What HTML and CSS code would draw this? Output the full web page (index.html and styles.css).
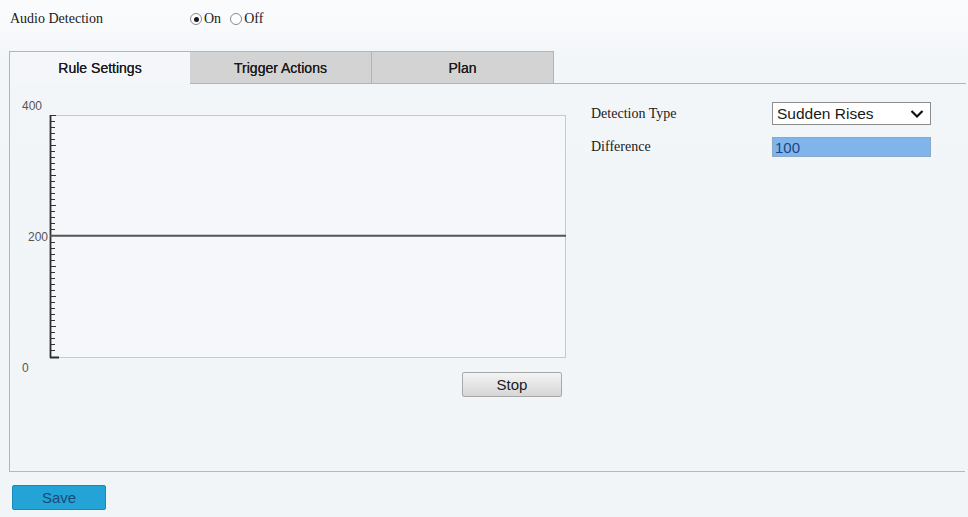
FILE: index.html
```html
<!DOCTYPE html>
<html>
<head>
<meta charset="utf-8">
<link rel="stylesheet" href="styles.css">
</head>
<body>
<div class="page">
  <div class="top-row">
    <span class="top-label">Audio Detection</span>
    <label class="radio"><span class="dot on"></span>On</label>
    <label class="radio"><span class="dot"></span>Off</label>
  </div>
  <div class="tabs">
    <div class="tab active">Rule Settings</div>
    <div class="tab">Trigger Actions</div>
    <div class="tab">Plan</div>
    <div class="tab-fill"></div>
  </div>
  <div class="panel">
    <div class="chart-col">
      <svg class="chart" width="560" height="278" viewBox="0 0 560 278">
        <rect x="40.5" y="21.5" width="515" height="242" fill="#f5f7fa" stroke="#c6c8cb" stroke-width="1"/>
        <path d="M40 21.5h6M40 27.5h5M40 33.5h5M40 39.5h5M40 45.5h5M40 51.5h6M40 57.5h5M40 63.5h5M40 69.5h5M40 75.5h5M40 81.5h6M40 87.5h5M40 93.5h5M40 99.5h5M40 105.5h5M40 111.5h6M40 117.5h5M40 123.5h5M40 129.5h5M40 135.5h5M40 148.5h5M40 154.5h5M40 160.5h5M40 166.5h5M40 172.5h6M40 178.5h5M40 184.5h5M40 190.5h5M40 196.5h5M40 202.5h6M40 208.5h5M40 214.5h5M40 220.5h5M40 226.5h5M40 232.5h6M40 238.5h5M40 244.5h5M40 250.5h5M40 256.5h5" stroke="#333" stroke-width="1.2"/>
        <path d="M40.5 21v243M40 263.5h9" stroke="#2e2e2e" stroke-width="1.8"/>
        <path d="M40 141.7h516" stroke="#555" stroke-width="2"/>
        <text x="12" y="16" class="ax">400</text>
        <text x="18" y="147" class="ax">200</text>
        <text x="12" y="278" class="ax">0</text>
      </svg>
      <button class="btn-stop">Stop</button>
    </div>
    <div class="form">
      <span class="f-label">Detection Type</span>
      <div class="select">
        <span>Sudden Rises</span>
        <svg width="14" height="10" viewBox="0 0 14 10"><path d="M1.5 2l5.5 5.5 5.5-5.5" fill="none" stroke="#111" stroke-width="2.2"/></svg>
      </div>
      <span class="f-label">Difference</span>
      <div class="input">100</div>
    </div>
  </div>
  <button class="btn-save">Save</button>
</div>
</body>
</html>
```
FILE: styles.css
```css
html, body {
  margin: 0;
  padding: 0;
}
body {
  width: 968px;
  height: 517px;
  overflow: hidden;
  background: linear-gradient(#fbfcfd 0, #f3f6f9 60px, #f2f5f8 100%);
  font-family: "Liberation Sans", Arial, sans-serif;
  color: #222;
}
.page {
  display: flex;
  flex-direction: column;
}
.top-row {
  height: 38px;
  display: flex;
  align-items: center;
  padding-left: 10px;
  font-family: "Liberation Serif", "Times New Roman", serif;
  font-size: 14px;
  color: #1a1a1a;
}
.top-label {
  width: 180px;
}
.radio {
  display: flex;
  align-items: center;
  margin-right: 9px;
}
.dot {
  width: 12px;
  height: 12px;
  border: 1px solid #8a8a8a;
  border-radius: 50%;
  background: #fff;
  margin-right: 2px;
  box-sizing: border-box;
  position: relative;
}
.dot.on::after {
  content: "";
  position: absolute;
  left: 2.5px;
  top: 2.5px;
  width: 5px;
  height: 5px;
  border-radius: 50%;
  background: #1a1a1a;
}
.tabs {
  margin-top: 13px;
  margin-left: 9px;
  display: flex;
  height: 33px;
}
.tab {
  width: 181px;
  box-sizing: border-box;
  display: flex;
  align-items: center;
  justify-content: center;
  font-size: 14px;
  color: #1a1a1a;
  background: #d3d3d3;
  border: 1px solid #b4b4b4;
  text-shadow: 0 0 0.4px #222;
}
.tab + .tab {
  border-left: none;
  width: 182px;
}
.tab.active {
  background: #f4f6f9;
  border-bottom: none;
  border-right: none;
}
.tab-fill {
  width: 412px;
  border-bottom: 1px solid #b4b4b4;
}
.panel {
  margin-left: 9px;
  width: 956px;
  height: 388px;
  box-sizing: border-box;
  border-left: 1px solid #b4b4b4;
  border-bottom: 1px solid #b8b8b8;
  display: flex;
}
.chart-col {
  width: 560px;
  padding-top: 10px;
  display: flex;
  flex-direction: column;
}
.chart {
  display: block;
  overflow: visible;
}
.ax {
  font-family: "Liberation Sans", Arial, sans-serif;
  font-size: 12px;
  fill: #555;
}
.btn-stop {
  align-self: flex-end;
  margin-right: 8px;
  width: 100px;
  height: 25px;
  font-family: "Liberation Sans", Arial, sans-serif;
  font-size: 15px;
  color: #1a1a1a;
  border: 1px solid #a8a8a8;
  border-radius: 2px;
  background: linear-gradient(#f4f4f4, #d6d6d6);
  padding: 0;
}
.form {
  margin-left: 21px;
  padding-top: 18px;
  display: grid;
  grid-template-columns: 181px 159px;
  grid-template-rows: 23px 20px;
  row-gap: 12px;
  align-items: center;
  align-content: start;
}
.f-label {
  font-family: "Liberation Serif", "Times New Roman", serif;
  font-size: 14px;
  color: #1a1a1a;
}
.select {
  height: 23px;
  box-sizing: border-box;
  border: 1px solid #8c8c8c;
  background: #fff;
  display: flex;
  align-items: center;
  justify-content: space-between;
  padding: 0 6px 0 4px;
  font-size: 15.5px;
  color: #1a1a1a;
}
.input {
  height: 20px;
  box-sizing: border-box;
  border: 1px solid #8aa9c8;
  background: #7fb5ea;
  display: flex;
  align-items: center;
  padding-left: 2px;
  font-size: 15px;
  color: #1c4687;
}
.btn-save {
  margin-top: 13px;
  margin-left: 12px;
  width: 94px;
  height: 25px;
  padding: 0;
  border: 1px solid #1a88b8;
  border-radius: 2px;
  background: #23a3d6;
  font-family: "Liberation Sans", Arial, sans-serif;
  font-size: 15px;
  color: #1b4a78;
}
```
